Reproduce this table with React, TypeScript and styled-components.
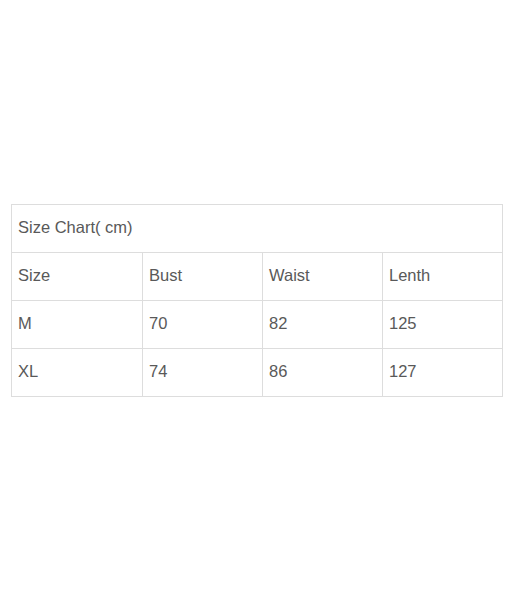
import React from "react";
import styled, { createGlobalStyle } from "styled-components";

const Global = createGlobalStyle`
  html, body { margin: 0; padding: 0; background: #fff; }
  body { font-family: "Liberation Sans", Arial, sans-serif; }
`;

const Page = styled.div`
  width: 510px;
  height: 600px;
  padding: 204px 0 0 11px;
  box-sizing: border-box;
`;

const Table = styled.table`
  border-collapse: collapse;
  table-layout: fixed;
  width: 491px;
  color: #595959;
  font-size: 16.5px;
`;

const Cell = styled.td`
  border: 1px solid #ddd;
  height: 48px;
  padding: 0 0 2px 6px;
  box-sizing: border-box;
  vertical-align: middle;
`;

const rows = [
  ["Size", "Bust", "Waist", "Lenth"],
  ["M", "70", "82", "125"],
  ["XL", "74", "86", "127"],
];
const widths = [131, 120, 120, 120];

export default function App() {
  return (
    <>
      <Global />
      <Page>
        <Table>
          <colgroup>
            {widths.map((w, i) => (
              <col key={i} style={{ width: w }} />
            ))}
          </colgroup>
          <tbody>
            <tr>
              <Cell colSpan={4}>Size Chart( cm)</Cell>
            </tr>
            {rows.map((r, i) => (
              <tr key={i}>
                {r.map((c, j) => (
                  <Cell key={j}>{c}</Cell>
                ))}
              </tr>
            ))}
          </tbody>
        </Table>
      </Page>
    </>
  );
}
